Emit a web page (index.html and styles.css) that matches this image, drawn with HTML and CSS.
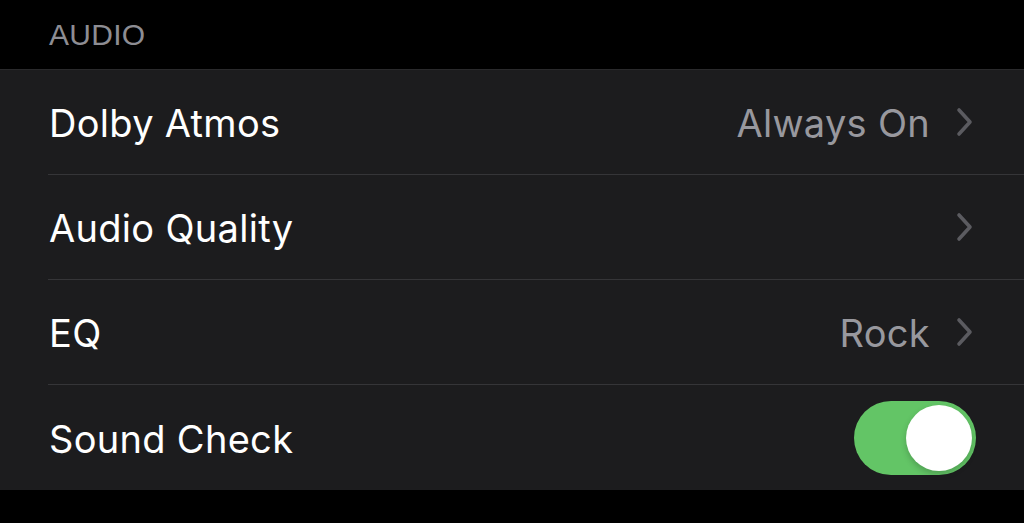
FILE: index.html
```html
<!DOCTYPE html>
<html>
<head>
<meta charset="utf-8">
<link rel="stylesheet" href="styles.css">
</head>
<body>
<div class="section-header">AUDIO</div>
<div class="group">
  <div class="row">
    <div class="row-inner">
      <span class="label">Dolby Atmos</span>
      <span class="value">Always On</span>
      <svg class="chevron" viewBox="0 0 18 30" width="18" height="30"><path d="M3 3 L14 15 L3 27" fill="none" stroke="#5b5b60" stroke-width="3.6" stroke-linecap="round" stroke-linejoin="round"/></svg>
    </div>
  </div>
  <div class="row">
    <div class="row-inner">
      <span class="label">Audio Quality</span>
      <svg class="chevron" viewBox="0 0 18 30" width="18" height="30"><path d="M3 3 L14 15 L3 27" fill="none" stroke="#5b5b60" stroke-width="3.6" stroke-linecap="round" stroke-linejoin="round"/></svg>
    </div>
  </div>
  <div class="row">
    <div class="row-inner">
      <span class="label">EQ</span>
      <span class="value">Rock</span>
      <svg class="chevron" viewBox="0 0 18 30" width="18" height="30"><path d="M3 3 L14 15 L3 27" fill="none" stroke="#5b5b60" stroke-width="3.6" stroke-linecap="round" stroke-linejoin="round"/></svg>
    </div>
  </div>
  <div class="row last">
    <div class="row-inner">
      <span class="label">Sound Check</span>
      <div class="toggle"><div class="knob"></div></div>
    </div>
  </div>
</div>
</body>
</html>
```
FILE: styles.css
```css
html, body {
  margin: 0;
  padding: 0;
  background: #000;
  width: 1024px;
  height: 523px;
  overflow: hidden;
  font-family: "Liberation Sans", Arial, sans-serif;
}
.section-header {
  height: 69px;
  box-sizing: border-box;
  padding: 18px 0 0 49px;
  font-size: 30px;
  color: #8d8d93;
  letter-spacing: 0.3px;
}
.group {
  background: #1c1c1e;
  border-top: 1px solid #2a2a2c;
}
.row {
  padding-left: 48px;
}
.row-inner {
  height: 104px;
  display: flex;
  align-items: center;
  border-bottom: 1px solid #353538;
  padding-right: 50px;
  padding-left: 1px;
}
.row.last .row-inner {
  border-bottom: none;
  height: 105px;
  padding-right: 48px;
}
.label {
  flex: 1;
  font-family: Inter, "Liberation Sans", sans-serif;
  font-size: 38px;
  letter-spacing: 0.3px;
  color: #ffffff;
  padding-top: 2px;
}
.value {
  font-family: Inter, "Liberation Sans", sans-serif;
  font-size: 38px;
  letter-spacing: 0.3px;
  color: #98989e;
  margin-right: 26px;
  padding-top: 2px;
}
.chevron {
  display: block;
}
.toggle {
  width: 122px;
  height: 74px;
  border-radius: 37px;
  background: #63c566;
  display: flex;
  align-items: center;
  justify-content: flex-end;
  padding-right: 4px;
  box-sizing: border-box;
}
.knob {
  width: 66px;
  height: 66px;
  border-radius: 50%;
  background: #fff;
  box-shadow: 0 3px 6px rgba(0,0,0,0.2);
}
```
